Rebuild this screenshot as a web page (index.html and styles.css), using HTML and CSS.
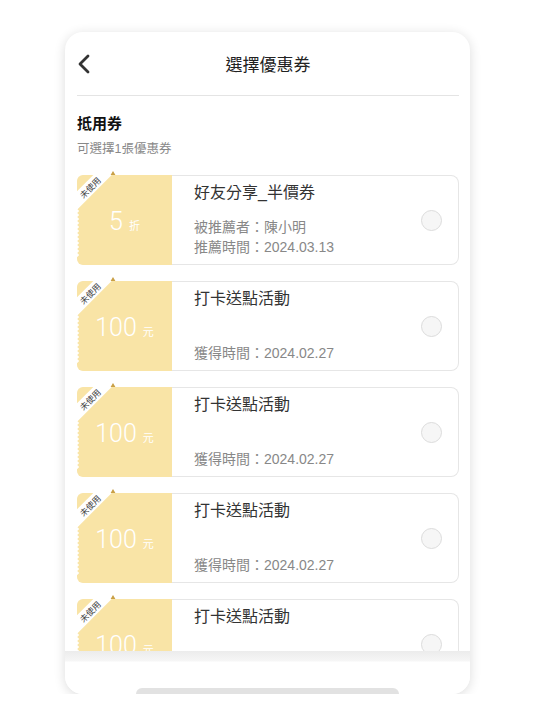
FILE: index.html
```html
<!DOCTYPE html>
<html lang="zh-Hant">
<head>
  <meta charset="UTF-8" />
  <meta name="viewport" content="width=device-width, initial-scale=1.0" />
  <title>選擇優惠券</title>
  <link rel="stylesheet" href="styles.css">
</head>
<body>
  <div class="phone">

    <!-- Header -->
    <div class="header">
      <svg class="back" width="14" height="20" viewBox="0 0 14 20">
        <path d="M11 2 L3 10 L11 18" fill="none" stroke="#333" stroke-width="2.8" stroke-linecap="round" stroke-linejoin="round"/>
      </svg>
      <div class="title">選擇優惠券</div>
    </div>

    <div class="scroll">
      <div class="section-title">抵用券</div>
      <div class="section-sub">可選擇1張優惠券</div>

      <div class="coupon">
        <div class="stub">
          <div class="ribbon">未使用</div>
          <div class="value"><span class="num">5</span><span class="unit">折</span></div>
        </div>
        <div class="info">
          <div class="name">好友分享_半價券</div>
          <div class="meta">
            <div>被推薦者：陳小明</div>
            <div>推薦時間：2024.03.13</div>
          </div>
        </div>
        <div class="radio"></div>
      </div>

      <div class="coupon">
        <div class="stub">
          <div class="ribbon">未使用</div>
          <div class="value"><span class="num">100</span><span class="unit">元</span></div>
        </div>
        <div class="info">
          <div class="name">打卡送點活動</div>
          <div class="meta">
            <div>獲得時間：2024.02.27</div>
          </div>
        </div>
        <div class="radio"></div>
      </div>

      <div class="coupon">
        <div class="stub">
          <div class="ribbon">未使用</div>
          <div class="value"><span class="num">100</span><span class="unit">元</span></div>
        </div>
        <div class="info">
          <div class="name">打卡送點活動</div>
          <div class="meta">
            <div>獲得時間：2024.02.27</div>
          </div>
        </div>
        <div class="radio"></div>
      </div>

      <div class="coupon">
        <div class="stub">
          <div class="ribbon">未使用</div>
          <div class="value"><span class="num">100</span><span class="unit">元</span></div>
        </div>
        <div class="info">
          <div class="name">打卡送點活動</div>
          <div class="meta">
            <div>獲得時間：2024.02.27</div>
          </div>
        </div>
        <div class="radio"></div>
      </div>

      <div class="coupon">
        <div class="stub">
          <div class="ribbon">未使用</div>
          <div class="value"><span class="num">100</span><span class="unit">元</span></div>
        </div>
        <div class="info">
          <div class="name">打卡送點活動</div>
          <div class="meta">
            <div>獲得時間：2024.02.27</div>
          </div>
        </div>
        <div class="radio"></div>
      </div>
    </div>

    <!-- Bottom bar -->
    <div class="footer">
      <div class="pill"></div>
    </div>

  </div>
</body>
</html>
```

FILE: styles.css
```css
body {
  margin: 0;
  padding: 0;
  background-color: #fff;
  font-family: "Liberation Sans", "Noto Sans CJK TC", sans-serif;
}
.phone {
  width: 405px;
  height: 662px;
  margin: 32px auto 0;
  background-color: #fff;
  border-radius: 18px;
  box-shadow: 0 2px 12px rgba(0, 0, 0, 0.14);
  display: flex;
  flex-direction: column;
  overflow: hidden;
}
.header {
  height: 63px;
  margin: 0 11px 0 12px;
  border-bottom: 1px solid #e4e4e4;
  display: flex;
  align-items: center;
  justify-content: center;
  position: relative;
}
.back {
  position: absolute;
  left: 0;
  top: 22px;
}
.title {
  font-size: 17px;
  color: #222;
}
.scroll {
  flex: 1;
  overflow: hidden;
  padding: 0 11px 0 12px;
}
.section-title {
  margin-top: 18px;
  font-size: 15px;
  line-height: 20px;
  font-weight: 700;
  color: #111;
}
.section-sub {
  margin-top: 6px;
  font-size: 12.5px;
  line-height: 18px;
  color: #888;
  margin-bottom: 17px;
}
.coupon {
  height: 88px;
  border: 1px solid #e6e6e6;
  border-left: none;
  border-radius: 8px;
  display: flex;
  align-items: stretch;
  margin-bottom: 16px;
  position: relative;
}
/* little fold of the ribbon */
.coupon::before {
  content: "";
  position: absolute;
  left: 33px;
  top: -5px;
  border-left: 3px solid transparent;
  border-right: 3px solid transparent;
  border-bottom: 5px solid #c9a046;
}
.stub {
  width: 95px;
  margin: -1px 0;
  background-color: #f9e4a6;
  border-radius: 6px 0 0 6px;
  position: relative;
  overflow: hidden;
  display: flex;
  align-items: center;
  justify-content: center;
}
/* serrated left edge */
.stub::before {
  content: "";
  position: absolute;
  left: 0;
  top: 30px;
  bottom: 8px;
  width: 3px;
  background-image: radial-gradient(circle at 0 50%, #fff 1.4px, transparent 2px);
  background-size: 3px 4px;
  background-repeat: repeat-y;
}
.ribbon {
  position: absolute;
  left: -17px;
  top: 6px;
  width: 60px;
  height: 13px;
  line-height: 13px;
  background-color: #fff;
  color: #444;
  font-family: "Noto Sans CJK TC", sans-serif;
  font-size: 8.5px;
  text-align: center;
  transform: rotate(-45deg);
}
.value {
  color: #fff;
  display: flex;
  align-items: baseline;
  margin-top: 2px;
}
.num {
  font-family: Roboto, "Liberation Sans", sans-serif;
  font-weight: 300;
  font-size: 25px;
}
.unit {
  font-family: "Noto Sans CJK TC", sans-serif;
  font-size: 11px;
  margin-left: 6px;
}
.info {
  flex: 1;
  padding: 7px 0 7px 22px;
  display: flex;
  flex-direction: column;
}
.name {
  font-size: 16px;
  line-height: 20px;
  color: #333;
}
.meta {
  margin-top: auto;
  font-size: 14px;
  line-height: 20px;
  color: #888;
}
.radio {
  width: 19px;
  height: 19px;
  border: 1px solid #dcdcdc;
  background-color: #f6f6f6;
  border-radius: 50%;
  align-self: center;
  margin-right: 16px;
}
.footer {
  height: 43px;
  background: linear-gradient(#ececec, #f6f6f6 10px, #fff 11px);
  display: flex;
  align-items: flex-end;
  justify-content: center;
}
.pill {
  width: 263px;
  height: 6px;
  background-color: #e2e2e2;
  border-radius: 10px 10px 0 0;
}
```
